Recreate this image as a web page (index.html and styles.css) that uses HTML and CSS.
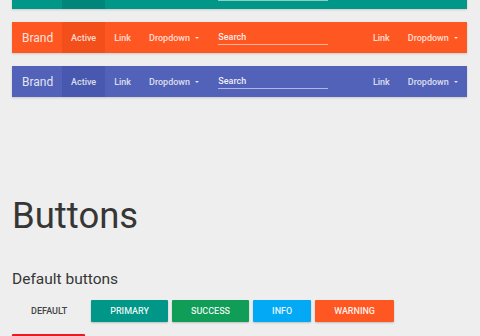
FILE: index.html
```html
<!DOCTYPE html>
<html lang="en">
<head>
<meta charset="utf-8">
<title>Paper theme</title>
<link rel="stylesheet" href="styles.css">
</head>
<body>
<div class="navbars">
  <nav class="navbar teal">
    <a class="brand">Brand</a>
    <ul class="nav">
      <li class="active"><a>Active</a></li>
      <li><a>Link</a></li>
      <li><a>Dropdown <span class="caret"></span></a></li>
    </ul>
    <form class="search"><span class="field">Search</span></form>
    <ul class="nav right">
      <li><a>Link</a></li>
      <li><a>Dropdown <span class="caret"></span></a></li>
    </ul>
  </nav>
  <nav class="navbar orange">
    <a class="brand">Brand</a>
    <ul class="nav">
      <li class="active"><a>Active</a></li>
      <li><a>Link</a></li>
      <li><a>Dropdown <span class="caret"></span></a></li>
    </ul>
    <form class="search"><span class="field">Search</span></form>
    <ul class="nav right">
      <li><a>Link</a></li>
      <li><a>Dropdown <span class="caret"></span></a></li>
    </ul>
  </nav>
  <nav class="navbar indigo">
    <a class="brand">Brand</a>
    <ul class="nav">
      <li class="active"><a>Active</a></li>
      <li><a>Link</a></li>
      <li><a>Dropdown <span class="caret"></span></a></li>
    </ul>
    <form class="search"><span class="field">Search</span></form>
    <ul class="nav right">
      <li><a>Link</a></li>
      <li><a>Dropdown <span class="caret"></span></a></li>
    </ul>
  </nav>
</div>

<h1 class="title">Buttons</h1>
<h2 class="subtitle">Default buttons</h2>
<div class="btn-row">
  <a class="btn btn-default">Default</a>
  <a class="btn btn-primary">Primary</a>
  <a class="btn btn-success">Success</a>
  <a class="btn btn-info">Info</a>
  <a class="btn btn-warning">Warning</a>
</div>
<div class="btn-row">
  <a class="btn btn-danger">Danger</a>
  <a class="btn btn-link">Link</a>
</div>
</body>
</html>
```

FILE: styles.css
```css
html, body {
  margin: 0;
  padding: 0;
}
body {
  background: #eeeeee;
  font-family: Roboto, "Liberation Sans", Arial, sans-serif;
  color: #333;
  padding: 0 13px 0 12px;
  overflow: hidden;
}
.navbars {
  display: flex;
  flex-direction: column;
  gap: 13px;
  margin-top: -22px;
}
.navbar {
  display: flex;
  align-items: stretch;
  height: 31px;
  color: rgba(255, 255, 255, 0.8);
  font-size: 9px;
  font-weight: 500;
  box-shadow: 0 1px 2px rgba(0, 0, 0, 0.15);
}
.teal { background: #009688; }
.teal .active { background: #00857a; }
.orange { background: #ff5722; }
.orange .active { background: #f24f1b; }
.indigo { background: #5262b9; }
.indigo .active { background: #4858ae; }

.brand {
  display: flex;
  align-items: center;
  padding: 0 10px;
  width: 30px;
  font-size: 12px;
  font-weight: 400;
  color: rgba(255, 255, 255, 0.85);
}
.nav {
  display: flex;
  margin: 0;
  padding: 0;
  list-style: none;
}
.nav li {
  display: flex;
}
.nav a {
  display: flex;
  align-items: center;
  padding: 0 9px;
  white-space: pre;
}
.caret {
  display: inline-block;
  width: 0;
  height: 0;
  margin-left: 3px;
  border-left: 2.5px solid transparent;
  border-right: 2.5px solid transparent;
  border-top: 2.5px solid currentColor;
}
.search {
  margin: 9px 0 0 10px;
}
.field {
  display: block;
  width: 110px;
  height: 13px;
  line-height: 12px;
  color: rgba(255, 255, 255, 0.92);
  border-bottom: 1px solid rgba(255, 255, 255, 0.55);
}
.right {
  margin-left: auto;
}

.title {
  margin: 100px 0 0;
  font-size: 36.5px;
  line-height: 38px;
  font-weight: 400;
  color: #363636;
}
.subtitle {
  margin: 36px 0 0;
  font-size: 15.5px;
  line-height: 17px;
  font-weight: 400;
  color: #363636;
}
.btn-row {
  display: flex;
  gap: 4px;
  margin-top: 12px;
}
.btn {
  display: block;
  height: 22px;
  line-height: 22px;
  padding: 0 19px;
  font-size: 9px;
  font-weight: 500;
  text-transform: uppercase;
  color: rgba(255, 255, 255, 0.92);
  border-radius: 1px;
  box-shadow: 0 1px 2px rgba(0, 0, 0, 0.2);
}
.btn-default { color: #444; box-shadow: none; background: transparent; padding: 0 20px 0 19px; }
.btn-primary { background: #009688; }
.btn-success { background: #0f9d58; }
.btn-info { background: #03a9f4; }
.btn-warning { background: #ff5722; }
.btn-danger { background: #e51c23; }
.btn-link { color: #009688; box-shadow: none; }
```
